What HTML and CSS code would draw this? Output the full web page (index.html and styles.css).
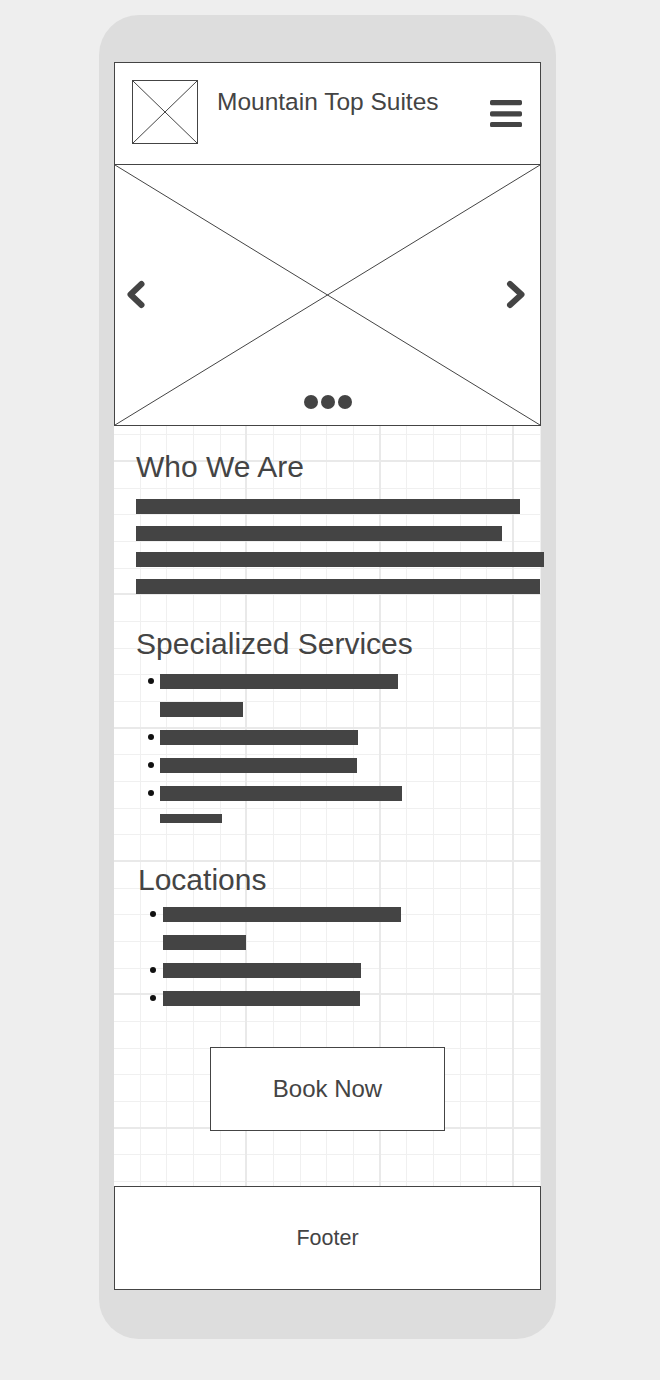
FILE: index.html
```html
<!DOCTYPE html>
<html lang="en">
<head>
<meta charset="utf-8">
<title>Mountain Top Suites – mobile wireframe</title>
<link rel="stylesheet" href="styles.css">
</head>
<body>
<div class="phone">
  <div class="screen">
    <header class="header">
      <div class="logo">
        <svg class="ph-x" viewBox="0 0 100 100" preserveAspectRatio="none"><line x1="0" y1="0" x2="100" y2="100"/><line x1="100" y1="0" x2="0" y2="100"/></svg>
      </div>
      <div class="title">Mountain Top Suites</div>
      <svg class="menu" width="32" height="27" viewBox="0 0 32 27"><rect x="0" y="0" width="32" height="5.2" rx="1.6"/><rect x="0" y="11.2" width="32" height="5.2" rx="1.6"/><rect x="0" y="22" width="32" height="5.2" rx="1.6"/></svg>
    </header>

    <section class="carousel">
      <svg class="ph-x" viewBox="0 0 100 100" preserveAspectRatio="none"><line x1="0" y1="0" x2="100" y2="100"/><line x1="100" y1="0" x2="0" y2="100"/></svg>
      <svg class="arrow arrow-left" width="24" height="32" viewBox="0 0 24 32"><polyline points="16.5,5 5.5,15.5 16.5,26"/></svg>
      <svg class="arrow arrow-right" width="24" height="32" viewBox="0 0 24 32"><polyline points="7,5 18.5,15.5 7,26"/></svg>
      <div class="dots"><span class="dot"></span><span class="dot"></span><span class="dot"></span></div>
    </section>

    <main class="content">
      <section class="block">
        <h2 class="heading heading-who">Who We Are</h2>
        <div class="para">
          <div class="bar" style="width:384px"></div>
          <div class="bar" style="width:366px"></div>
          <div class="bar" style="width:408px"></div>
          <div class="bar" style="width:404px"></div>
        </div>
      </section>

      <section class="block">
        <h2 class="heading heading-services">Specialized Services</h2>
        <ul class="list list-services">
          <li class="item"><div class="lines"><div class="bar" style="width:238px"></div><div class="bar" style="width:83px"></div></div></li>
          <li class="item"><div class="lines"><div class="bar" style="width:198px"></div></div></li>
          <li class="item"><div class="lines"><div class="bar" style="width:197px"></div></div></li>
          <li class="item"><div class="lines"><div class="bar" style="width:242px"></div><div class="bar bar-thin" style="width:62px"></div></div></li>
        </ul>
      </section>

      <section class="block block-loc">
        <h2 class="heading heading-loc">Locations</h2>
        <ul class="list list-loc">
          <li class="item"><div class="lines"><div class="bar" style="width:238px"></div><div class="bar" style="width:83px"></div></div></li>
          <li class="item"><div class="lines"><div class="bar" style="width:198px"></div></div></li>
          <li class="item"><div class="lines"><div class="bar" style="width:197px"></div></div></li>
        </ul>
      </section>

      <div class="cta-row">
        <button class="cta" type="button">Book Now</button>
      </div>
    </main>

    <footer class="footer">Footer</footer>
  </div>
</div>
</body>
</html>
```

FILE: styles.css
```css
* {
  box-sizing: border-box;
}

html, body {
  margin: 0;
  padding: 0;
}

body {
  background: #eeeeee;
  font-family: "Liberation Sans", Arial, sans-serif;
  color: #444444;
}

.phone {
  width: 457px;
  margin: 15px 0 0 99px;
  padding: 47px 15px 49px;
  background: #dddddd;
  border-radius: 40px;
}

.screen {
  width: 427px;
  background:
    repeating-linear-gradient(to right, transparent 0 131.333px, #e9e9e9 131.333px 133.333px),
    repeating-linear-gradient(to bottom, transparent 0 131.333px, #e9e9e9 131.333px 133.333px),
    repeating-linear-gradient(to right, transparent 0 25.667px, #f0f0f0 25.667px 26.667px),
    repeating-linear-gradient(to bottom, transparent 0 25.667px, #f0f0f0 25.667px 26.667px),
    #ffffff;
}

.ph-x {
  display: block;
  width: 100%;
  height: 100%;
}

.ph-x line {
  stroke: #444444;
  stroke-width: 1;
  vector-effect: non-scaling-stroke;
}

/* Header */
.header {
  height: 102px;
  display: flex;
  align-items: flex-start;
  padding-left: 17px;
  background: #ffffff;
  border: 1px solid #444444;
  border-bottom: none;
}

.logo {
  width: 66px;
  height: 64px;
  margin-top: 17px;
  border: 1px solid #444444;
  flex: none;
}

.title {
  margin: 25px 0 0 19px;
  font-size: 24.5px;
  line-height: 28px;
  white-space: nowrap;
}

.menu {
  display: block;
  margin: 37px 18px 0 auto;
  flex: none;
}

.menu rect {
  fill: #444444;
}

/* Carousel */
.carousel {
  position: relative;
  height: 262px;
  background: #ffffff;
  border: 1px solid #444444;
}

.arrow {
  position: absolute;
  top: 114px;
}

.arrow polyline {
  fill: none;
  stroke: #444444;
  stroke-width: 6;
  stroke-linecap: round;
  stroke-linejoin: round;
}

.arrow-left {
  left: 10px;
}

.arrow-right {
  left: 388px;
}

.dots {
  position: absolute;
  left: 0;
  right: 0;
  bottom: 16px;
  display: flex;
  justify-content: center;
  gap: 3px;
}

.dot {
  width: 14px;
  height: 14px;
  border-radius: 50%;
  background: #444444;
}

/* Content */
.content {
  height: 760px;
  padding: 24px 0 0 22px;
  display: flex;
  flex-direction: column;
}

.heading {
  margin: 0;
  font-size: 30px;
  line-height: 34px;
  font-weight: normal;
  color: #444444;
  white-space: nowrap;
}

.heading-services {
  margin-top: 32.6px;
}

.heading-loc {
  margin-top: 40px;
}

.block-loc {
  padding-left: 2px;
}

.para {
  margin-top: 15px;
  display: flex;
  flex-direction: column;
  gap: 11.67px;
}

.bar {
  height: 15px;
  background: #444444;
  flex: none;
}

.bar-thin {
  height: 9px;
}

.list {
  list-style: none;
  margin: 0 0 0 12px;
  padding: 0;
  display: flex;
  flex-direction: column;
  gap: 13px;
}

.list-services {
  margin-top: 13.4px;
}

.list-loc {
  margin-top: 10px;
}

.item {
  display: flex;
  align-items: flex-start;
}

.item::before {
  content: "";
  width: 6px;
  height: 6px;
  margin-top: 4.5px;
  margin-right: 6px;
  border-radius: 50%;
  background: #111111;
  flex: none;
}

.list-loc .item::before {
  margin-right: 7px;
}

.lines {
  display: flex;
  flex-direction: column;
  gap: 13px;
}

.cta-row {
  margin-top: 41px;
  margin-left: -22px;
  display: flex;
  justify-content: center;
}

.cta {
  width: 235px;
  height: 84px;
  padding: 0;
  border: 1px solid #444444;
  background: #ffffff;
  font-family: "Liberation Sans", Arial, sans-serif;
  font-size: 24px;
  color: #444444;
  display: flex;
  align-items: center;
  justify-content: center;
}

/* Footer */
.footer {
  height: 104px;
  background: #ffffff;
  border: 1px solid #444444;
  display: flex;
  align-items: center;
  justify-content: center;
  font-size: 21.5px;
  color: #444444;
}
```
